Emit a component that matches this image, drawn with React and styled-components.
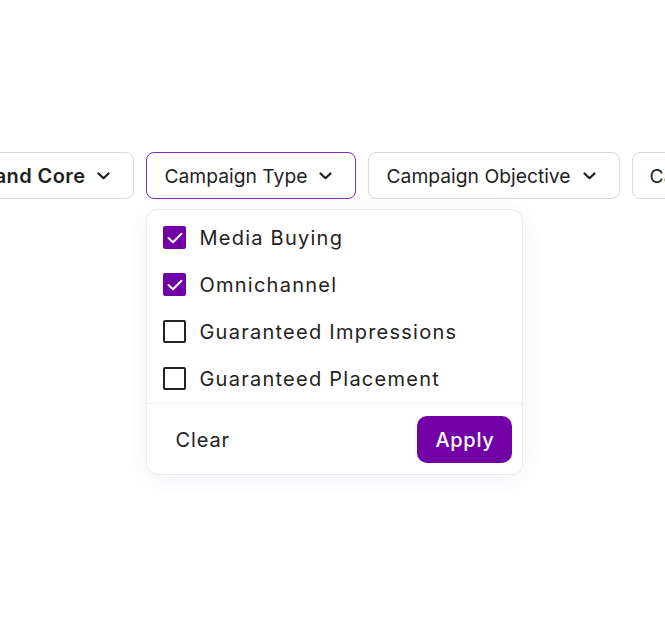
import React, { useState } from 'react';
import styled, { createGlobalStyle } from 'styled-components';

const GlobalStyle = createGlobalStyle`
  html, body {
    margin: 0;
    padding: 0;
    background: #ffffff;
  }
  body {
    font-family: Inter, "Noto Sans", sans-serif;
    color: #1f1f1f;
    overflow: hidden;
  }
`;

const Page = styled.div`
  width: 665px;
  height: 640px;
  overflow: hidden;
  padding-top: 152px;
  box-sizing: border-box;
`;

const FilterRow = styled.div`
  display: flex;
  gap: 12px;
  margin-left: -45px;
  align-items: flex-start;
`;

const FilterItem = styled.div`
  position: relative;
  flex-shrink: 0;
`;

const FilterButton = styled.button`
  display: flex;
  align-items: center;
  gap: 12px;
  height: 47px;
  padding: 0 23px 0 17px;
  background: #fff;
  border: 1px solid ${p => (p.$open ? '#8a2cbf' : '#d9d9d9')};
  border-radius: 8px;
  font-family: Inter, "Noto Sans", sans-serif;
  font-size: ${p => (p.$active ? '20px' : '19.3px')};
  font-weight: ${p => (p.$active ? 600 : 400)};
  letter-spacing: ${p => (p.$active ? '0.4px' : 'normal')};
  color: #1f1f1f;
  white-space: nowrap;
  cursor: pointer;
`;

const Chevron = () => (
  <svg width="13" height="8" viewBox="0 0 13 8" fill="none">
    <path d="M1.5 1.5L6.5 6.3L11.5 1.5" stroke="#1f1f1f" strokeWidth="2.2" strokeLinecap="round" strokeLinejoin="round" />
  </svg>
);

const Panel = styled.div`
  position: absolute;
  top: 57px;
  left: 0;
  width: 377px;
  background: #fff;
  border: 1px solid #ebebeb;
  border-radius: 12px;
  box-shadow: 0 4px 24px rgba(90, 40, 130, 0.07);
  box-sizing: border-box;
  font-family: Inter, "Noto Sans", sans-serif;
  z-index: 2;
`;

const OptionList = styled.div`
  padding: 4px 0 1px;
  border-bottom: 1px solid #eeeeee;
`;

const Option = styled.label`
  display: flex;
  align-items: center;
  gap: 13px;
  height: 47px;
  padding: 0 16px;
  font-size: 20px;
  letter-spacing: 1.25px;
  color: #222;
  cursor: pointer;
`;

const Box = styled.span`
  width: 23px;
  height: 23px;
  box-sizing: border-box;
  border-radius: 2px;
  display: flex;
  align-items: center;
  justify-content: center;
  background: ${p => (p.$checked ? '#7100a6' : '#fff')};
  border: ${p => (p.$checked ? 'none' : '2px solid #222')};
  flex-shrink: 0;
`;

const Footer = styled.div`
  display: flex;
  align-items: center;
  justify-content: space-between;
  padding: 12px 10px 11px 28px;
`;

const ClearButton = styled.button`
  background: none;
  border: none;
  padding: 0;
  font-family: Inter, "Noto Sans", sans-serif;
  font-size: 20px;
  letter-spacing: 0.9px;
  color: #222;
  cursor: pointer;
`;

const ApplyButton = styled.button`
  width: 95px;
  height: 47px;
  border: none;
  border-radius: 10px;
  background: #7100a6;
  color: #fff;
  font-family: Inter, "Noto Sans", sans-serif;
  font-size: 20px;
  font-weight: 500;
  letter-spacing: 0.7px;
  cursor: pointer;
`;

const Check = () => (
  <svg width="16" height="12" viewBox="0 0 16 12" fill="none">
    <path d="M1.5 6L6 10.3L14.5 1.7" stroke="#fff" strokeWidth="2" strokeLinecap="round" strokeLinejoin="round" />
  </svg>
);

const filters = [
  { label: 'Brand Core', active: true },
  { label: 'Campaign Type', open: true },
  { label: 'Campaign Objective' },
  { label: 'Campaign Status' },
];

const initialOptions = [
  { label: 'Media Buying', checked: true },
  { label: 'Omnichannel', checked: true },
  { label: 'Guaranteed Impressions', checked: false },
  { label: 'Guaranteed Placement', checked: false },
];

export default function App() {
  const [options, setOptions] = useState(initialOptions);

  const toggle = (i) => {
    setOptions(options.map((o, idx) => (idx === i ? { ...o, checked: !o.checked } : o)));
  };

  return (
    <Page>
      <GlobalStyle />
      <FilterRow>
        {filters.map(f => (
          <FilterItem key={f.label}>
            <FilterButton $open={f.open} $active={f.active}>
              {f.label}
              <Chevron />
            </FilterButton>
            {f.open && (
              <Panel>
                <OptionList>
                  {options.map((o, i) => (
                    <Option key={o.label} onClick={() => toggle(i)}>
                      <Box $checked={o.checked}>{o.checked && <Check />}</Box>
                      {o.label}
                    </Option>
                  ))}
                </OptionList>
                <Footer>
                  <ClearButton onClick={() => setOptions(options.map(o => ({ ...o, checked: false })))}>
                    Clear
                  </ClearButton>
                  <ApplyButton>Apply</ApplyButton>
                </Footer>
              </Panel>
            )}
          </FilterItem>
        ))}
      </FilterRow>
    </Page>
  );
}
